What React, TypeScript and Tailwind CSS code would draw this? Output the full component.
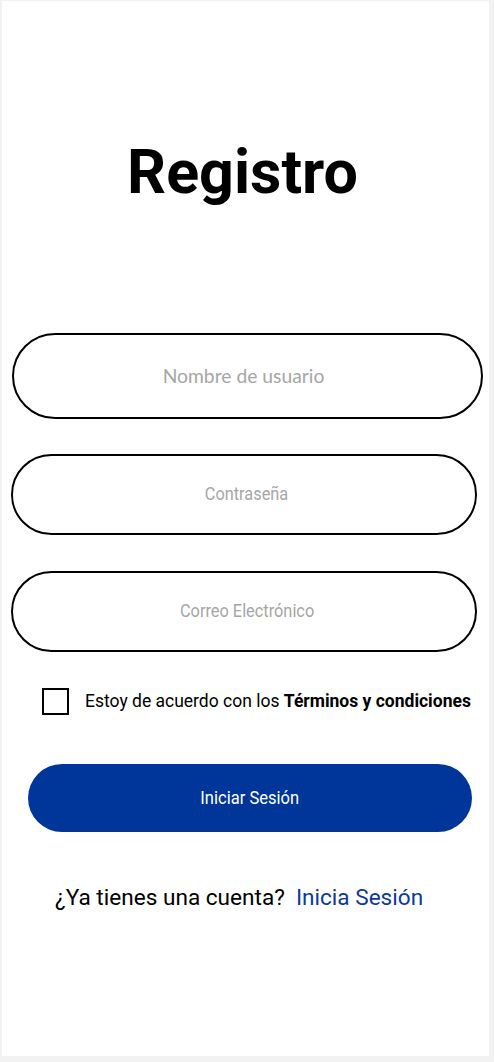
import React from "react";

export default function App() {
  return (
    <div className="w-[494px] h-[1062px] bg-[#f2f2f2] overflow-hidden" style={{ fontFamily: "Roboto, 'Liberation Sans', sans-serif" }}>
      <div className="ml-[2px] mt-[1px] w-[487px] h-[1055px] bg-white flex flex-col">
        <h1 className="mt-[134px] h-[74px] leading-[74px] text-[61px] font-bold text-black text-center pr-[6px]">
          Registro
        </h1>

        <div className="mt-[124px] ml-[10px] w-[471px] h-[86px] rounded-full border-2 border-black flex items-center justify-center pr-[8px]">
          <span className="text-[19.3px] text-[#a6a6a6]" style={{ fontFamily: "Lato, 'Open Sans', sans-serif" }}>
            Nombre de usuario
          </span>
        </div>

        <div className="mt-[35px] ml-[9px] w-[466px] h-[81px] rounded-full border-2 border-black flex items-center justify-center pl-[6px]">
          <span className="inline-block text-[19px] text-[#a6a6a6] scale-x-[0.86]">Contraseña</span>
        </div>

        <div className="mt-[36px] ml-[9px] w-[466px] h-[81px] rounded-full border-2 border-black flex items-center justify-center pl-[6px]">
          <span className="inline-block text-[19px] text-[#a6a6a6] scale-x-[0.86]">Correo Electrónico</span>
        </div>

        <div className="mt-[36px] ml-[40px] flex items-center">
          <div className="w-[27px] h-[27px] border-2 border-black shrink-0" />
          <p className="ml-[16px] text-[17.5px] text-black whitespace-nowrap">
            Estoy de acuerdo con los <span className="font-bold">Términos y condiciones</span>
          </p>
        </div>

        <button className="mt-[49px] ml-[26px] w-[444px] h-[68px] rounded-full bg-[#003699] flex items-center justify-center">
          <span className="inline-block text-[19px] text-white scale-x-[0.87]">Iniciar Sesión</span>
        </button>

        <p className="mt-[52px] ml-[53px] h-[28px] leading-[28px] text-[22.6px] text-black whitespace-nowrap">
          ¿Ya tienes una cuenta?<span className="ml-[11px] text-[#0b3a9c]">Inicia Sesión</span>
        </p>
      </div>
    </div>
  );
}
